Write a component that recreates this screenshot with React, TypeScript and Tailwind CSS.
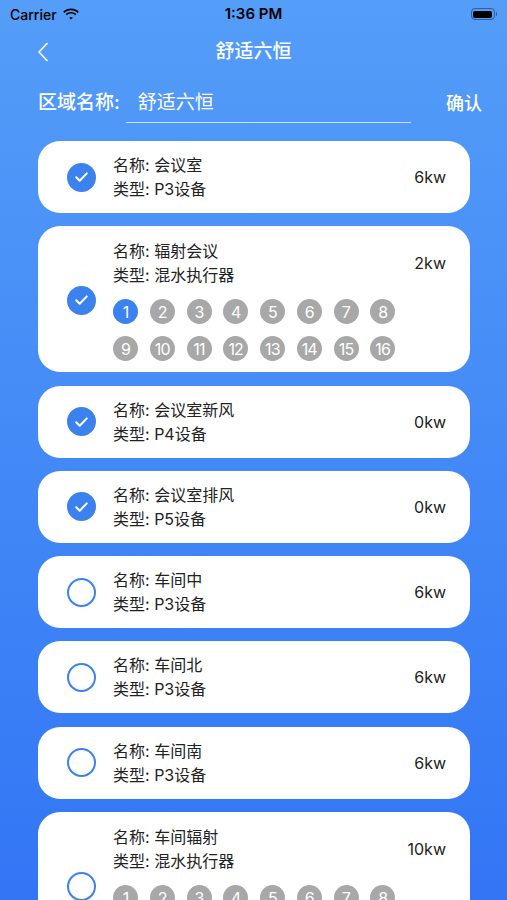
import React from "react";

type Device = {
  name: string;
  type: string;
  power: string;
  checked: boolean;
  channels?: number;
  activeChannel?: number;
};

const devices: Device[] = [
  { name: "会议室", type: "P3设备", power: "6kw", checked: true },
  { name: "辐射会议", type: "混水执行器", power: "2kw", checked: true, channels: 16, activeChannel: 1 },
  { name: "会议室新风", type: "P4设备", power: "0kw", checked: true },
  { name: "会议室排风", type: "P5设备", power: "0kw", checked: true },
  { name: "车间中", type: "P3设备", power: "6kw", checked: false },
  { name: "车间北", type: "P3设备", power: "6kw", checked: false },
  { name: "车间南", type: "P3设备", power: "6kw", checked: false },
  { name: "车间辐射", type: "混水执行器", power: "10kw", checked: false, channels: 16 },
];

function StatusBar() {
  return (
    <div className="relative flex h-[28px] items-center justify-between px-[10px] text-black">
      <div className="flex items-center gap-[6px]">
        <span className="text-[14px] font-medium">Carrier</span>
        <svg width="16" height="12" viewBox="0 0 16 12">
          <path d="M8 2.2c2.6 0 4.9 1 6.6 2.7l1.2-1.2C13.8 1.7 11 .5 8 .5S2.2 1.7.2 3.7l1.2 1.2C3.1 3.2 5.4 2.2 8 2.2z" fill="#000" />
          <path d="M8 5.6c1.6 0 3.1.6 4.2 1.7l1.2-1.2C12 4.7 10.1 3.9 8 3.9S4 4.7 2.6 6.1l1.2 1.2C4.9 6.2 6.4 5.6 8 5.6z" fill="#000" />
          <path d="M8 9c.7 0 1.3.3 1.8.7L8 11.5 6.2 9.7C6.7 9.3 7.3 9 8 9z" fill="#000" />
        </svg>
      </div>
      <span className="absolute left-1/2 -translate-x-1/2 text-[15px] font-semibold">1:36 PM</span>
      <div className="flex items-center">
        <div className="h-[12px] w-[24px] rounded-[4px] border border-black/40 p-[1.5px]">
          <div className="h-full w-full rounded-[2px] bg-black" />
        </div>
        <div className="ml-[1px] h-[4px] w-[1.5px] rounded-r bg-black/40" />
      </div>
    </div>
  );
}

function CheckCircle({ checked }: { checked: boolean }) {
  if (checked) {
    return (
      <div className="flex h-[29px] w-[29px] shrink-0 items-center justify-center rounded-full bg-[#3c82ef]">
        <svg width="15" height="12" viewBox="0 0 15 12">
          <path d="M2.2 6.3l3.5 3.4L12.8 2.4" fill="none" stroke="#fff" strokeWidth="2" strokeLinecap="round" strokeLinejoin="round" />
        </svg>
      </div>
    );
  }
  return <div className="h-[29px] w-[29px] shrink-0 rounded-full border-[2px] border-[#3c82ef]" />;
}

function DeviceCard({ device }: { device: Device }) {
  const hasChannels = !!device.channels;
  return (
    <div
      className={`flex items-center rounded-[22px] bg-white pl-[29px] pr-[24px] ${
        hasChannels ? "pb-[11px] pt-[13px]" : "py-[12px]"
      }`}
    >
      <CheckCircle checked={device.checked} />
      <div className="ml-[17px] flex flex-1 flex-col">
        <div className="flex items-center justify-between">
          <div className="text-[16px] leading-[24px] text-[#222]">
            <div>名称: {device.name}</div>
            <div>类型: {device.type}</div>
          </div>
          <span className="text-[16px] text-[#222]">{device.power}</span>
        </div>
        {hasChannels && (
          <div className="mt-[12px] grid w-[294px] grid-cols-8 gap-y-[12px]">
            {Array.from({ length: device.channels! }, (_, i) => i + 1).map((n) => (
              <div
                key={n}
                className={`flex h-[25px] w-[25px] items-center justify-center rounded-full text-[16px] tracking-[-0.8px] text-white ${
                  n === device.activeChannel ? "bg-[#3c82ef]" : "bg-[#a8a8a8]"
                }`}
              >
                {n}
              </div>
            ))}
          </div>
        )}
      </div>
    </div>
  );
}

export default function App() {
  return (
    <div className="h-[900px] w-full overflow-hidden bg-linear-to-b from-[#549df8] to-[#3375f5] font-['Inter','Noto_Sans_CJK_SC',sans-serif]">
      <StatusBar />
      <div className="relative flex h-[48px] items-center justify-center">
        <svg className="absolute left-[37px]" width="12" height="20" viewBox="0 0 12 20">
          <path d="M10 1.5L2 10l8 8.5" fill="none" stroke="#fff" strokeWidth="1.6" strokeLinecap="round" strokeLinejoin="round" />
        </svg>
        <span className="text-[19px] font-medium text-white">舒适六恒</span>
      </div>
      <div className="flex h-[57px] items-center pb-[2px] pl-[38px] pr-[25px]">
        <span className="text-[19px] font-medium text-white">区域名称:</span>
        <div className="ml-[6px] flex h-[38px] w-[285px] items-center border-b border-white/70 pl-[12px] pt-[1px]">
          <span className="text-[19px] text-white">舒适六恒</span>
        </div>
        <span className="ml-auto text-[18px] font-medium text-white">确认</span>
      </div>
      <div className="mt-[8px] flex flex-col gap-[13.3px] pl-[38px] pr-[37px]">
        {devices.map((d) => (
          <DeviceCard key={d.name} device={d} />
        ))}
      </div>
    </div>
  );
}
